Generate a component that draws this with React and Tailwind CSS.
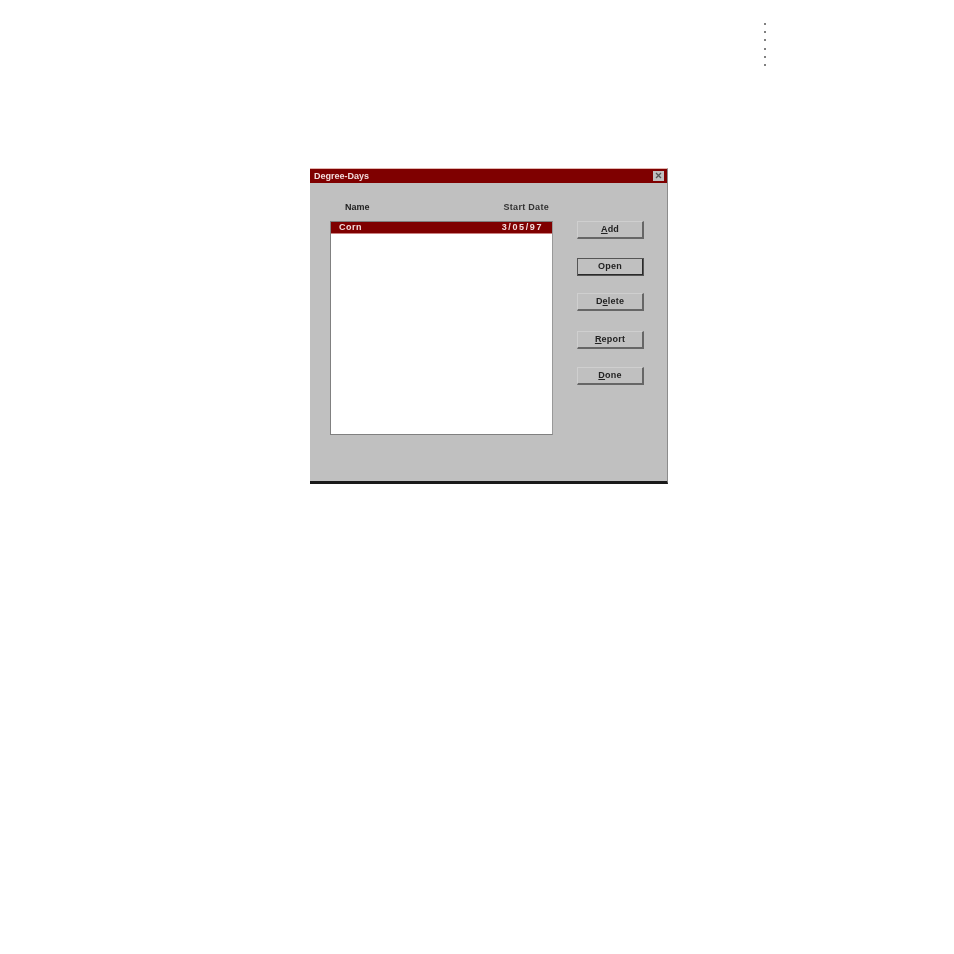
const buttons = [
  { before: '', key: 'A', after: 'dd', cls: 'h-[18px] mb-[19px]' },
  { before: 'Open', key: '', after: '', cls: 'h-[18px] mb-[17px]', active: true },
  { before: 'D', key: 'e', after: 'lete', cls: 'h-[18px] mb-[20px]' },
  { before: '', key: 'R', after: 'eport', cls: 'h-[18px] mb-[18px]' },
  { before: '', key: 'D', after: 'one', cls: 'h-[18px]' },
];

const PageDots = () => (
  <div className="flex flex-col gap-[6.2px] w-[3px] ml-[764px]">
    {[0, 1, 2, 3, 4, 5].map((i) => (
      <div key={i} className="w-[2px] h-[2px] bg-[#808080]" />
    ))}
  </div>
);

const DialogButton = ({ item }) => (
  <button
    className={`${item.cls} w-[67px] flex items-center justify-center bg-[#c0c0c0] border-t border-l border-t-[#cfcfcf] border-l-[#cfcfcf] border-r-2 border-b-2 ${
      item.active
        ? 'border-r-[#2a2a2a] border-b-[#2a2a2a] outline outline-1 outline-[#555555] -outline-offset-1'
        : 'border-r-[#666666] border-b-[#666666]'
    } text-[9px] font-bold tracking-[0.2px] text-[#222222]`}
  >
    <span className="blur-[0.6px]">
      {item.before}
      {item.key && <span className="underline">{item.key}</span>}
      {item.after}
    </span>
  </button>
);

export default function App() {
  return (
    <div className="w-[954px] h-[954px] bg-white pt-[23px] font-['Liberation_Sans',Arial,sans-serif]">
      <PageDots />
      <div className="ml-[310px] mt-[102px] w-[358px] h-[316px] flex flex-col bg-[#c0c0c0] border-t border-t-[#e3b5b0] border-b-[3px] border-b-[#1a1a1a] border-r border-r-[#8c8c8c]">
        {/* title bar */}
        <div className="h-[14px] bg-[#7f0000] flex items-center justify-between pl-[4px] pr-[3px]">
          <span className="pt-[1px] text-[9px] font-bold text-[#f2dcdc] blur-[0.5px]">Degree-Days</span>
          <div className="w-[11px] h-[10px] bg-[#c0c0c0] flex items-center justify-center">
            <svg width="7" height="7" viewBox="0 0 7 7" stroke="#555555" strokeWidth="1.3">
              <path d="M1 1l5 5M6 1l-5 5" />
            </svg>
          </div>
        </div>

        <div className="flex pl-[20px] pt-[18px]">
          <div className="w-[223px]">
            <div className="h-[20px] flex justify-between pl-[15px] pr-[4px] text-[9px] font-bold text-[#222222]">
              <span className="blur-[0.6px]">Name</span>
              <span className="text-[#333333] tracking-[0.3px] blur-[0.6px]">Start Date</span>
            </div>
            <div className="h-[214px] bg-white border border-[#808080] border-r-[#999999] flex flex-col">
              <div className="h-[12px] bg-[#7f0000] border-b border-b-[#c98080] flex items-center justify-between pl-[8px] pr-[9px] text-[9px] font-bold text-[#f4dede]">
                <span className="tracking-[0.5px] blur-[0.5px]">Corn</span>
                <span className="tracking-[1.6px] blur-[0.5px]">3/05/97</span>
              </div>
            </div>
          </div>
          <div className="ml-[24px] pt-[20px] flex flex-col">
            {buttons.map((item, i) => (
              <DialogButton key={i} item={item} />
            ))}
          </div>
        </div>
      </div>
    </div>
  );
}
